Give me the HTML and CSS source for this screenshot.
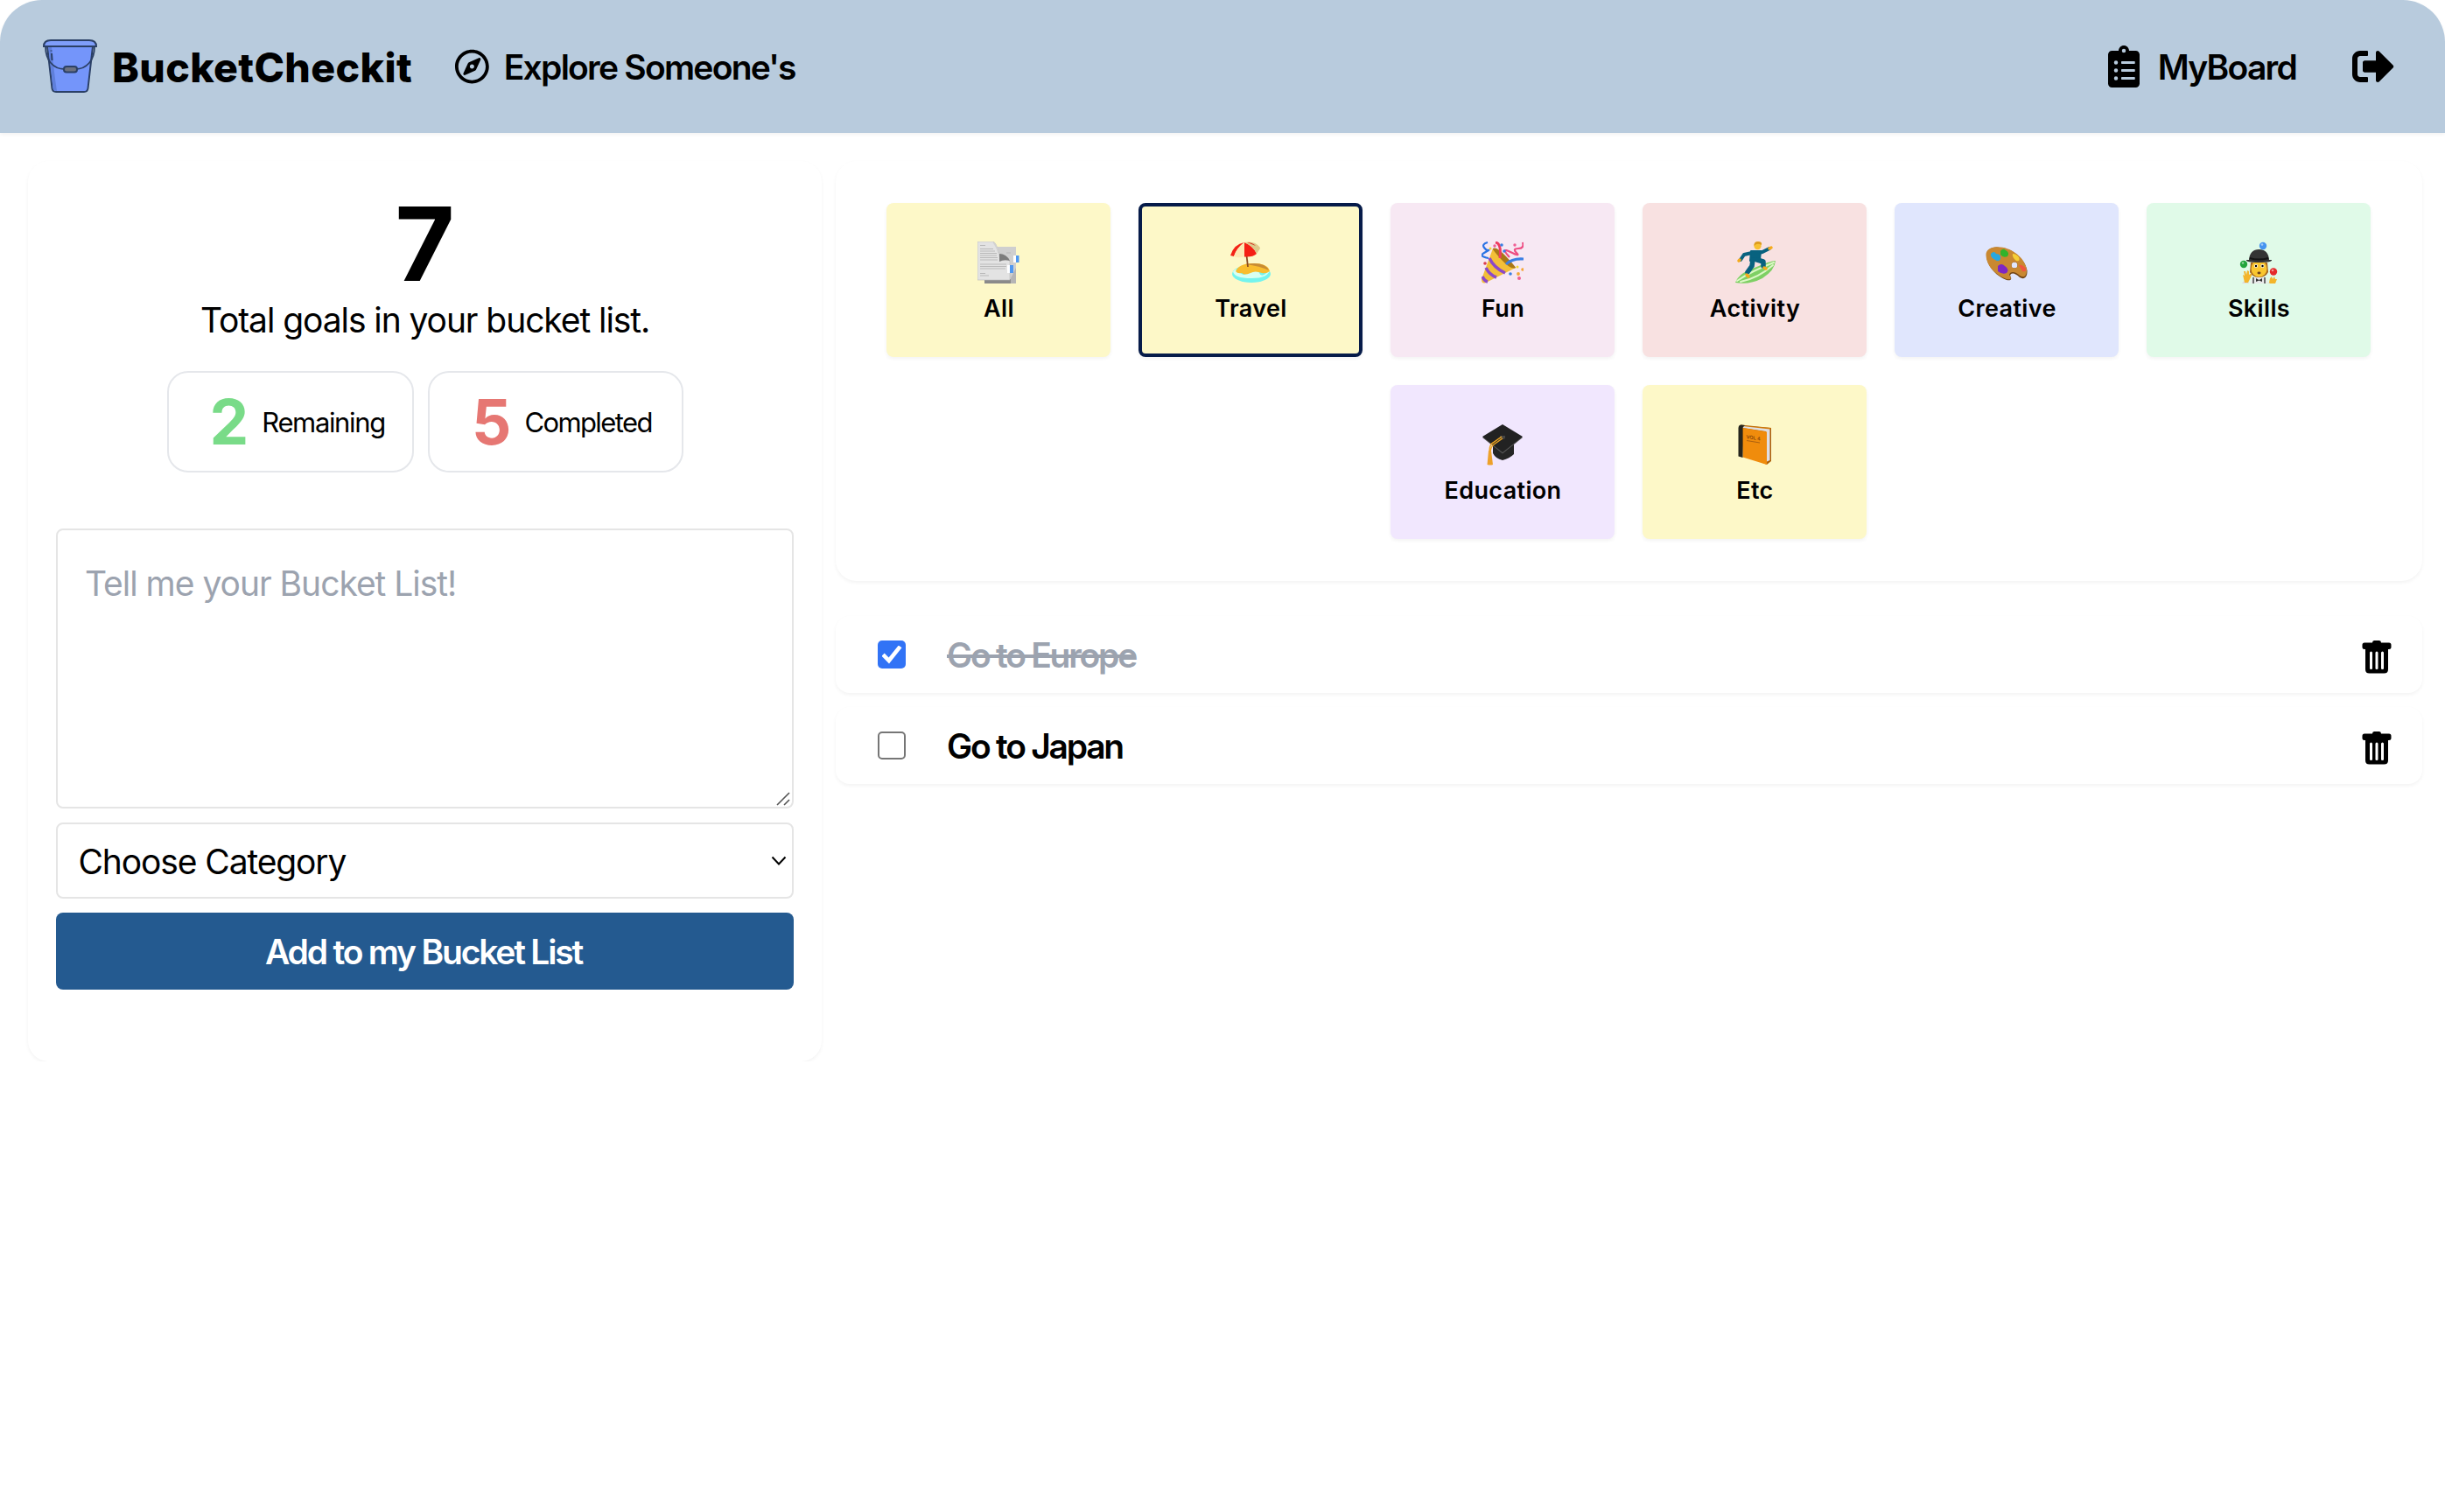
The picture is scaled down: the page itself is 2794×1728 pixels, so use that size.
FILE: index.html
```
<!DOCTYPE html>
<html lang="en">
<head>
<meta charset="utf-8">
<title>BucketCheckit</title>
<link rel="stylesheet" href="styles.css">
</head>
<body>
<header class="header">
  <a class="brand">
    <svg class="brand-icon" viewBox="0 0 62 62" fill="none" stroke="#2b4066" stroke-width="2">
      <path d="M5 8 10.500 56Q11 60 15 60H47Q51 60 51.500 56L57 8Z" fill="#7495fa"/>
      <path d="M6.500 9 11.500 55Q12 59 16 59 13 40 10 9Z" fill="#5f7fdb" stroke="none"/>
      <path d="M1 8Q1 1 9 1H53Q61 1 61 8Z" fill="#7f9efa"/>
      <path d="M3 8C3 24 12 34 25 34M59 8C59 24 50 34 37 34" stroke-width="1.800"/>
      <rect x="24" y="31" width="15" height="6.500" rx="3" fill="#6c7180"/>
      <path d="M9.500 12.500V13.500M10 16 10.500 24"/>
    </svg>
    <span class="brand-name">BucketCheckit</span>
  </a>
  <a class="nav-link explore">
    <svg class="icon-compass" viewBox="0 0 496 512"><path d="M347.940 129.860L203.600 195.830a31.938 31.938 0 0 0-15.770 15.770l-65.970 144.340c-7.610 16.650 9.540 33.810 26.200 26.200l144.340-65.970a31.938 31.938 0 0 0 15.770-15.770l65.970-144.340c7.610-16.660-9.540-33.810-26.200-26.200zm-77.360 148.720c-12.470 12.470-32.690 12.470-45.160 0-12.470-12.470-12.470-32.690 0-45.160 12.470-12.470 32.690-12.470 45.160 0 12.470 12.470 12.470 32.690 0 45.160zM248 8C111.030 8 0 119.030 0 256s111.030 248 248 248 248-111.030 248-248S384.970 8 248 8zm0 448c-110.280 0-200-89.720-200-200S137.720 56 248 56s200 89.720 200 200-89.720 200-200 200z"/></svg>
    <span class="nav-text">Explore Someone's</span>
  </a>
  <a class="nav-link board">
    <svg class="icon-board" viewBox="0 0 384 512">
      <path fill-rule="evenodd" d="M336 64h-80c0-35.300-28.700-64-64-64s-64 28.700-64 64H48C21.500 64 0 85.500 0 112v352c0 26.500 21.500 48 48 48h288c26.500 0 48-21.500 48-48V112c0-26.500-21.500-48-48-48zM192 40a24 24 0 1 1 0 48a24 24 0 1 1 0-48zM96 184a24 24 0 1 1 0 48a24 24 0 1 1 0-48zM96 280a24 24 0 1 1 0 48a24 24 0 1 1 0-48zM96 376a24 24 0 1 1 0 48a24 24 0 1 1 0-48zM168 192h152q8 0 8 8v16q0 8-8 8H168q-8 0-8-8v-16q0-8 8-8zM168 288h152q8 0 8 8v16q0 8-8 8H168q-8 0-8-8v-16q0-8 8-8zM168 384h152q8 0 8 8v16q0 8-8 8H168q-8 0-8-8v-16q0-8 8-8z"/>
    </svg>
    <span class="nav-text">MyBoard</span>
  </a>
  <svg class="icon-logout" viewBox="0 0 512 512"><path d="M497 273L329 441c-15 15-41 4.500-41-17v-96H152c-13.300 0-24-10.700-24-24v-96c0-13.300 10.700-24 24-24h136V88c0-21.400 25.900-32 41-17l168 168c9.300 9.400 9.300 24.600 0 34zM192 436v-40c0-6.600-5.400-12-12-12H96c-17.700 0-32-14.300-32-32V160c0-17.700 14.300-32 32-32h84c6.600 0 12-5.400 12-12V76c0-6.600-5.400-12-12-12H96c-53 0-96 43-96 96v192c0 53 43 96 96 96h84c6.600 0 12-5.400 12-12z"/></svg>
</header>

<main class="layout">
  <section class="card summary">
    <div class="total">7</div>
    <p class="total-label">Total goals in your bucket list.</p>
    <div class="counts">
      <div class="count remaining"><b class="count-number">2</b><span class="count-label">Remaining</span></div>
      <div class="count completed"><b class="count-number">5</b><span class="count-label">Completed</span></div>
    </div>
    <form class="form">
      <div class="field">
        <textarea class="goal-input" placeholder="Tell me your Bucket List!"></textarea>
        <svg class="grip" viewBox="0 0 16 16"><path d="M1 15 15 1M9 15 15 9" stroke="#555" stroke-width="1.600"/></svg>
      </div>
      <div class="field">
        <select class="category-select"><option>Choose Category</option></select>
        <svg class="chevron" viewBox="0 0 18 12"><path d="M1.500 1.500 9 9.500 16.500 1.500" fill="none" stroke="#000" stroke-width="2"/></svg>
      </div>
      <button type="button" class="add-button">Add to my Bucket List</button>
    </form>
  </section>

  <div class="content">
    <section class="card categories">
      <div class="tile yellow">
        <svg class="tile-icon" viewBox="0 0 48 48">
          <path d="M8 6H44V48H8Z" fill="#cfcfcf"/>
          <path d="M8 43H38L44 36V48H8Z" fill="#8a8a8a"/>
          <path d="M38 42 44 30V48H38Z" fill="#b5b5b5"/>
          <path d="M0 0H18Q22 2 24 13 32 14 37 23V44H0Z" fill="#e3e3e3" stroke="#b9b9b9" stroke-width=".6"/>
          <path d="M17 0Q23 2 24 13 33 14 37 22 31 21 25 23 25 15 21 7Z" fill="#d2d2d2"/>
          <path d="M25 14Q33 14 37 22 30 20 25 23Z" fill="#7c7c7c"/>
          <path d="M3 4.500H9M3 8.500H18M3 11H20M3 13.500H22M3 16H22M3 18.500H23M3 21H23M3 26H33M3 28.500H33M3 31H32M3 36.500H9M3 39H13M33 13H38" stroke="#b4b4b4" stroke-width=".9"/>
          <path d="M34 27H38V36H34ZM41 16H45V24H41Z" fill="#fff"/>
          <path d="M37 27H41V36H37ZM44 16H47.500V24H44Z" fill="#4f98f0"/>
        </svg>
        <span class="tile-label">All</span>
      </div>
      <div class="tile yellow selected">
        <svg class="tile-icon" viewBox="0 0 48 48">
          <ellipse cx="25" cy="37" rx="22" ry="10" fill="#74f4ee"/>
          <path d="M4 34Q9 29 12 35T23 35 34 36 46 32Q45 42 25 42T4 34Z" fill="#d8fff2"/>
          <path d="M7 34Q11 25 27 25 44 25 46 34 42 37 37 36 29 33 24 36 17 39 14 36 9 37 7 34Z" fill="#f9bd2e"/>
          <path d="M18 26Q40 22 45 33 35 28 18 26Z" fill="#c88c33"/>
          <path d="M18 2 21 29" stroke="#8a4b22" stroke-width="1.800"/>
          <path d="M17 1Q5 3 1 16L5 17Q8 8 17 1Z" fill="#f32216"/>
          <path d="M17 1Q8 7 5 17 8 19 17 17.500Z" fill="#fde9b4"/>
          <path d="M17 1V17.500Q27 18 31 14 27 5 17 1Z" fill="#f51f14"/>
          <path d="M17 1Q28 6 31 14L35 8Q29 3 17 1Z" fill="#dccb8c"/>
          <path d="M17 1Q29 2 33.500 10L35 7Q29-1 17 1Z" fill="#e0c98a"/>
          <path d="M20 1Q26 1 30 5 25 3 20 1Z" fill="#cf3423"/>
        </svg>
        <span class="tile-label">Travel</span>
      </div>
      <div class="tile pink">
        <svg class="tile-icon" viewBox="0 0 48 48" fill="none">
          <path d="M13 8Q23 12 39 30L5 47Q0 49 0 43Z" fill="#f3bf38"/>
          <path d="M13 8Q17 5 28 17T39 30Q34 33 23 21T13 8Z" fill="#a97718"/>
          <path d="M9 19Q14 30 27 36M5 30Q9 38 17 41M1 40Q3 45 7 46" stroke="#8b49c9" stroke-width="3.500"/>
          <path d="M16 1Q23 2 21 19" stroke="#ee3d61" stroke-width="3"/>
          <path d="M28 26Q35 19 48 20" stroke="#3b7fe4" stroke-width="3"/>
          <path d="M7 1Q0 3 3 7T8 10 3 13 8 19" stroke="#2a73e4" stroke-width="2.200"/>
          <path d="M47 1Q49 8 42 8T40 13 33 12 32 18" stroke="#ee4e83" stroke-width="2.200"/>
          <g fill="#ef5f94"><circle cx="15" cy="5" r="1.700"/><circle cx="38" cy="4" r="1.700"/><circle cx="4" cy="25" r="1.800" fill="#dc3d4d"/><circle cx="43" cy="42" r="2"/></g>
          <g fill="#3b7fe4"><circle cx="23" cy="4" r="1.800"/><circle cx="26" cy="11" r="1.800"/><circle cx="33" cy="37" r="1.800"/></g>
          <g fill="#f4a636"><circle cx="10" cy="8" r="1.500" fill="#f4d936"/><circle cx="47" cy="32" r="1.800"/><circle cx="42" cy="37" r="1.900"/><circle cx="41" cy="29" r="1.500" fill="#f4d936"/></g>
        </svg>
        <span class="tile-label">Fun</span>
      </div>
      <div class="tile red">
        <svg class="tile-icon" viewBox="0 0 48 48" fill="none" stroke-linecap="round" stroke-linejoin="round">
          <path d="M2 47Q6 36 24 30 42 22 48 22 47 33 33 42 18 50 2 47Z" fill="#7ed064"/>
          <path d="M4 45Q20 34 46 24M8 46Q28 42 45 27" stroke="#dcf8c6" stroke-width="2"/>
          <path d="M24 14 33 12 41 8M21 13 12 15 8 21" stroke="#08627f" stroke-width="4"/>
          <path d="M20 11H31L30 21 19 22Z" fill="#08627f" stroke="#08627f" stroke-width="2"/>
          <path d="M27 21 34 23 34 28M22 21 21 28 16 35" stroke="#08627f" stroke-width="5.500"/>
          <path d="M41 8 43 7M7 21 6 22M35 30 37 31M15 38 17 40" stroke="#f5ab1c" stroke-width="3.500"/>
          <circle cx="27.500" cy="5" r="4.200" fill="#f8c132"/>
          <path d="M23.500 5Q23 0 28 0T32 4Q27 1 23.500 5Z" fill="#dc9b1d"/>
        </svg>
        <span class="tile-label">Activity</span>
      </div>
      <div class="tile blue">
        <svg class="tile-icon" viewBox="0 0 48 48">
          <path fill="#704313" d="M1 17C1 9 8 5 17 7 31 8 45 20 47.500 33 48 41 44 44 39 41 34 36 29 35 28 39 31 44 28 45 24 44 13 40 2 29 1 17Z M33 23.500a3.500 3.500 0 1 0 0 7a3.500 3.500 0 1 0 0-7Z" fill-rule="evenodd"/>
          <path fill="#c98831" fill-rule="evenodd" d="M.5 16C0 9 7 5 16 6.500 30 7 45 19 47 32 47 40 44 42 39 39 34 34 28 34 27 38 31 43 28 44 24 43 12 39 1 28 .5 16ZM33 23.500a3.500 3.500 0 1 0 0 7a3.500 3.500 0 1 0 0-7Z"/>
          <path d="M6 14Q10 10 12 14 18 14 17 20 15 24 11 21 5 18 6 14Z" fill="#27a7e0"/>
          <path d="M17 11Q20 7 23 10 28 13 25 17 20 19 17 15Z" fill="#32b32b"/>
          <path d="M31 14Q35 14 38 18 40 23 35 22 30 18 31 14Z" fill="#f6cf36"/>
          <path d="M38 27Q42 26 46 31 47 35 42 34Z" fill="#f0553f"/>
          <path d="M14 28Q18 24 22 28 28 32 24 36 19 38 14 34Z" fill="#7e26c4"/>
        </svg>
        <span class="tile-label">Creative</span>
      </div>
      <div class="tile green">
        <svg class="tile-icon" viewBox="0 0 48 48">
          <path d="M5 48Q7 43 12 46L13 48ZM34 48Q38 44 44 48Z" fill="#ddd"/>
          <path d="M15 48Q15 40 24.500 40T34 48Z" fill="#e9e9ea"/>
          <path d="M18 41V48M31 41V48" stroke="#444" stroke-width="1.500"/>
          <path d="M15 24H34L35 35Q32 41 24.500 41T14 35Z" fill="#a8671d"/>
          <ellipse cx="24.500" cy="31" rx="9" ry="9.500" fill="#f9c62f"/>
          <circle cx="21" cy="28" r="2" fill="#fff"/><circle cx="28.500" cy="28" r="2" fill="#fff"/>
          <circle cx="21" cy="28" r="1.200"/><circle cx="28.500" cy="28" r="1.200"/>
          <ellipse cx="24.500" cy="36" rx="2" ry="1.400" fill="#69401b"/>
          <path d="M21 42 24.500 44 28 42V46L24.500 44.500 21 46Z" fill="#333"/>
          <path d="M13 21Q14 9 24.500 9T36 21L39 21Q40 24 24.500 24T10 21Z" fill="#343434"/>
          <path d="M14 18Q24 21 35 18L35.500 20Q24 23 13.500 20Z" fill="#151515"/>
          <path d="M6 38 8 39 7 34 9 34 10 38 11 33 13 34 13 38 16 36 16 39 12 47H8ZM36 47 37 42 39 40 40 43 42 40 43 43 45 43 43 48H37Z" fill="#f3b52b"/>
          <circle cx="29" cy="5" r="4.200" fill="#4594f0"/><circle cx="7" cy="26" r="4.200" fill="#22a43c"/><circle cx="41" cy="34.500" r="4.200" fill="#e52a2a"/>
          <g fill="#fff" opacity=".5"><circle cx="28" cy="3.500" r="1.300"/><circle cx="6" cy="24.500" r="1.300"/><circle cx="40" cy="33" r="1.300"/></g>
        </svg>
        <span class="tile-label">Skills</span>
      </div>
      <div class="tile purple">
        <svg class="tile-icon" viewBox="0 0 48 48">
          <path d="M13 20H37V35Q32 40 24 42 16 40 13 34Z" fill="#252525"/>
          <path d="M24 2 47 16 24 34.500 1 16Z" fill="#555"/>
          <path d="M24 1 47 15 24 33 1 15Z" fill="#222"/>
          <path d="M21 14H27V17Q24 19 21 17Z" fill="#454545"/>
          <path d="M23 15 13 22Q9 24 9 32M24 17 14 24Q11 26 10 32" fill="none" stroke="#eca31f" stroke-width="1.500"/>
          <path d="M8 31H11L13 47Q10 48 6.500 47Z" fill="#eda12b"/>
        </svg>
        <span class="tile-label">Education</span>
      </div>
      <div class="tile yellow">
        <svg class="tile-icon" viewBox="0 0 48 48">
          <path d="M8 1.500 43 5V43L38 47 11 36Z" fill="#ad5f08"/>
          <path d="M9 2.500 43 5 38 9 11 5Z" fill="#d57d0b"/>
          <path d="M10 3 41.500 6.500V42L37 44V9L11 5Z" fill="#dedee2"/>
          <path d="M10.500 5 38 9.500V47L10.500 38.500Z" fill="#f08c0c"/>
          <path d="M6 3Q7 1 9 1.500L13 2 10.500 4.500V39L5.500 37.500V5Z" fill="#25251d"/>
          <text class="book-title" transform="matrix(1 .16 0 1 14.500 17)">VOL 4</text>
          <path d="M15 19.500 30 22" stroke="#9b5510" stroke-width=".8"/>
        </svg>
        <span class="tile-label">Etc</span>
      </div>
    </section>

    <ul class="goals">
      <li class="goal done">
        <input class="check" type="checkbox" checked>
        <span class="goal-text">Go to Europe</span>
        <svg class="trash" viewBox="0 0 34 38"><path fill-rule="evenodd" d="M12 2.500Q12 0 14 0H20Q22 0 22 2.500H31Q33.500 2.500 33.500 5V8Q33.500 10 31 10H30V33Q30 37.500 25.500 37.500H8.500Q4 37.500 4 33V10H3Q.5 10 .5 8V5Q.5 2.500 3 2.500ZM9 14V32Q9 33 10.500 33T12 32V14Q12 12.500 10.500 12.500T9 14ZM15.500 14V32Q15.500 33 17 33T18.500 32V14Q18.500 12.500 17 12.500T15.500 14ZM22 14V32Q22 33 23.500 33T25 32V14Q25 12.500 23.500 12.500T22 14Z"/></svg>
      </li>
      <li class="goal">
        <input class="check" type="checkbox">
        <span class="goal-text">Go to Japan</span>
        <svg class="trash" viewBox="0 0 34 38"><path fill-rule="evenodd" d="M12 2.500Q12 0 14 0H20Q22 0 22 2.500H31Q33.500 2.500 33.500 5V8Q33.500 10 31 10H30V33Q30 37.500 25.500 37.500H8.500Q4 37.500 4 33V10H3Q.5 10 .5 8V5Q.5 2.500 3 2.500ZM9 14V32Q9 33 10.500 33T12 32V14Q12 12.500 10.500 12.500T9 14ZM15.500 14V32Q15.500 33 17 33T18.500 32V14Q18.500 12.500 17 12.500T15.500 14ZM22 14V32Q22 33 23.500 33T25 32V14Q25 12.500 23.500 12.500T22 14Z"/></svg>
      </li>
    </ul>
  </div>
</main>
</body>
</html>
```
FILE: styles.css
```
* { box-sizing: border-box; margin: 0; padding: 0; }

body {
  font-family: Inter, "Liberation Sans", sans-serif;
  font-size: 39px;
  color: #000;
  background: #fff;
}

svg { display: block; flex: none; }

/* Header */
.header {
  display: flex;
  align-items: center;
  height: 152px;
  padding: 0 58px 0 49px;
  border-radius: 48px 48px 0 0;
  background: #b8cbdd;
  box-shadow: 0 2px 4px rgba(0, 0, 0, .05);
}
.brand, .nav-link { display: flex; align-items: center; white-space: nowrap; }
.brand { gap: 17px; }
.brand-icon { width: 62px; height: 62px; }
.brand-name { width: 344px; padding-top: 2px; font-size: 46.5px; font-weight: 800; letter-spacing: .35px; }
.nav-text { font-weight: 600; letter-spacing: -1.75px; }
.explore { gap: 17px; margin-left: 48px; }
.icon-compass { width: 38.75px; height: 40px; }
.board { gap: 21px; margin-left: auto; }
.icon-board { width: 36px; height: 48px; }
.icon-logout { width: 48px; height: 48px; margin-left: 64px; }

/* Page columns */
.layout {
  display: grid;
  grid-template-columns: 907px 1fr;
  align-items: start;
  gap: 16px;
  padding: 32px 26px 0 32px;
}
.card {
  border-radius: 24px;
  background: #fff;
  box-shadow: 0 2px 4px rgba(0, 0, 0, .05);
}

/* Summary and form */
.summary {
  display: flex;
  flex-direction: column;
  height: 1029px;
  padding: 34px 32px 0;
  text-align: center;
}
.total { font-size: 117px; font-weight: 700; line-height: 121px; }
.total-label { line-height: 53px; letter-spacing: -1.08px; }
.counts { display: flex; justify-content: center; gap: 16px; margin-top: 32px; }
.count {
  display: flex;
  align-items: center;
  gap: 15px;
  height: 116px;
  padding: 0 0 0 47px;
  border: 2px solid #e5e7eb;
  border-radius: 24px;
}
.remaining { width: 282px; }
.completed { width: 292px; padding-left: 48.5px; }
.count-number { font-size: 71px; line-height: 1; }
.remaining .count-number { color: #79db88; }
.completed .count-number { color: #e67773; }
.count-label { font-size: 31px; letter-spacing: -1.35px; }
.completed .count-label { letter-spacing: -1.6px; }

.form { display: flex; flex-direction: column; gap: 16px; margin-top: 64px; }
.field { position: relative; display: flex; }
.goal-input, .category-select {
  width: 100%;
  border: 2px solid #e5e5e5;
  border-radius: 8px;
  background: #fff;
  color: #000;
  font: inherit;
  outline: none;
}
.goal-input {
  height: 320px;
  padding: 33px 31px;
  line-height: 56px;
  letter-spacing: -1.02px;
  resize: none;
}
.goal-input::placeholder { color: #9ca3af; opacity: 1; }
.grip { position: absolute; right: 4px; bottom: 3px; width: 16px; height: 16px; }
.category-select {
  height: 87px;
  padding: 2px 23.5px 0;
  letter-spacing: -1.12px;
  appearance: none;
}
.chevron { position: absolute; right: 8px; top: 38px; width: 18px; height: 12px; }
.add-button {
  height: 88px;
  padding: 0 3px 0 0;
  border: 0;
  border-radius: 8px;
  background: #245a90;
  color: #fff;
  font: inherit;
  font-weight: 600;
  letter-spacing: -2.2px;
}

/* Category tiles */
.categories {
  display: flex;
  flex-wrap: wrap;
  justify-content: center;
  align-content: flex-start;
  gap: 32px;
  height: 480px;
  padding: 48px 49px 0 48px;
}
.tile {
  display: flex;
  flex-direction: column;
  align-items: center;
  width: 256px;
  height: 176px;
  padding-top: 44px;
  border-radius: 8px;
  box-shadow: 0 2px 4px rgba(0, 0, 0, .05);
}
.selected { padding-top: 40px; border: 4px solid #061b49; }
.yellow { background: #fdf8c8; }
.pink { background: #f7e8f3; }
.red { background: #f8e1e1; }
.blue { background: #e0e6fd; }
.green { background: #e0fae8; }
.purple { background: #f1e7fe; }
.tile-icon { width: 48px; height: 48px; }
.tile-label { margin-top: 13px; padding-left: 1px; font-size: 27px; font-weight: 600; line-height: 32px; letter-spacing: .35px; }
.book-title { font: 600 5.5px Inter, sans-serif; fill: #864408; }

/* Goal list */
.goals { display: flex; flex-direction: column; gap: 16px; margin-top: 40px; list-style: none; }
.goal {
  display: flex;
  align-items: center;
  height: 88px;
  padding: 0 35px 0 48px;
  border-radius: 16px;
  background: #fff;
  box-shadow: 0 2px 4px rgba(0, 0, 0, .05);
}
.check {
  flex: none;
  width: 32px;
  height: 32px;
  border: 2px solid #767676;
  border-radius: 5px;
  background: #fff;
  appearance: none;
}
.check:checked {
  display: grid;
  place-items: center;
  border: 0;
  background: #3173f6;
}
.check:checked::before {
  content: "";
  width: 23px;
  height: 21px;
  background: #fff;
  clip-path: polygon(0 58%, 14% 43%, 35% 67%, 84% 0, 100% 13%, 37% 100%);
}
.goal-text { flex: 1; margin-left: 47px; font-weight: 600; letter-spacing: -2.25px; }
.done .goal-text { color: #9ca3af; text-decoration: line-through; text-decoration-thickness: 4px; }
.trash { width: 34px; height: 38px; margin-bottom: -6px; }
```
